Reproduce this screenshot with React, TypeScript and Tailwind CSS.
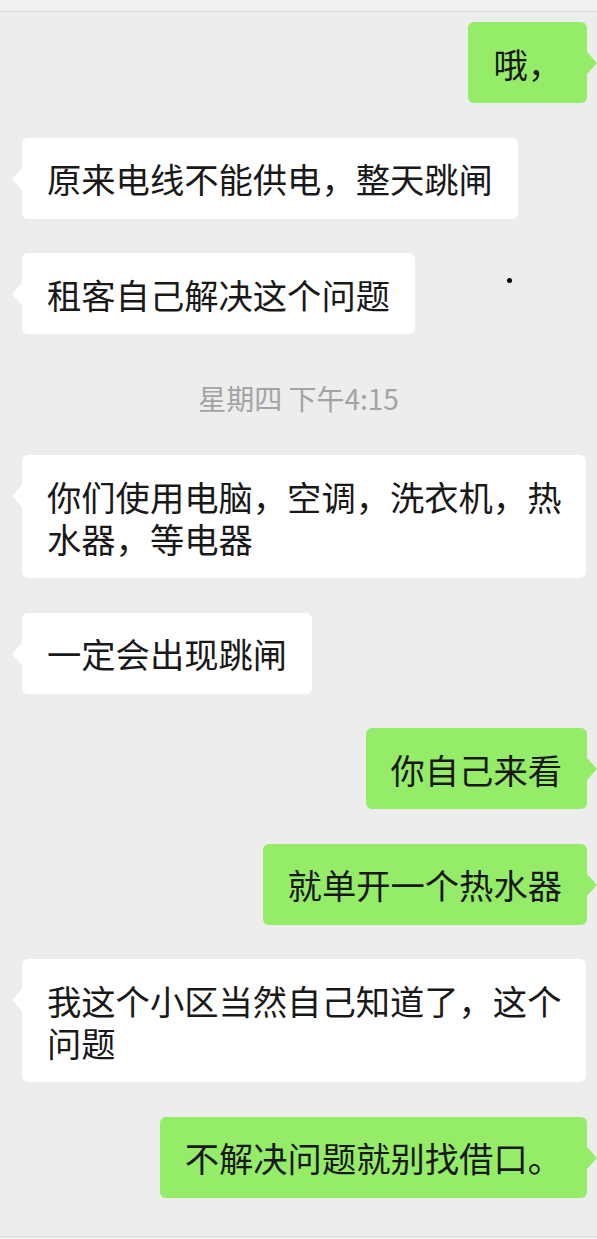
import React from "react";

type Msg =
  | { kind: "in" | "out"; lines: string[] }
  | { kind: "time"; text: string };

const messages: Msg[] = [
  { kind: "out", lines: ["哦，"] },
  { kind: "in", lines: ["原来电线不能供电，整天跳闸"] },
  { kind: "in", lines: ["租客自己解决这个问题"] },
  { kind: "time", text: "星期四 下午4:15" },
  { kind: "in", lines: ["你们使用电脑，空调，洗衣机，热", "水器，等电器"] },
  { kind: "in", lines: ["一定会出现跳闸"] },
  { kind: "out", lines: ["你自己来看"] },
  { kind: "out", lines: ["就单开一个热水器"] },
  { kind: "in", lines: ["我这个小区当然自己知道了，这个", "问题"] },
  { kind: "out", lines: ["不解决问题就别找借口。"] },
];

function Bubble({ kind, lines }: { kind: "in" | "out"; lines: string[] }) {
  const mine = kind === "out";
  return (
    <div
      className={`relative rounded-[6px] px-[25px] py-[19.5px] text-[34.3px] leading-[42px] whitespace-nowrap text-[#191919] ${
        mine ? "self-end bg-[#95ec69]" : "self-start ml-[12px] bg-white"
      }`}
    >
      {lines.map((l, i) => (
        <div key={i} className="h-[42px]">
          {l}
        </div>
      ))}
      {mine ? (
        <span className="absolute right-[-10px] top-[30px] w-0 h-0 border-y-[11px] border-y-transparent border-l-[10px] border-l-[#95ec69]" />
      ) : (
        <span className="absolute left-[-10px] top-[30px] w-0 h-0 border-y-[11px] border-y-transparent border-r-[10px] border-r-white" />
      )}
    </div>
  );
}

export default function App() {
  return (
    <div className="relative w-[597px] h-[1239px] bg-[#ededed] flex flex-col overflow-hidden font-['Noto_Sans_CJK_SC','Noto_Sans',sans-serif]">
      <div className="h-[12px] bg-[#f0f0f0] border-b border-[#dcdcdc]" />

      <div className="flex flex-col gap-[34.5px] pt-[10px] px-[10px]">
        {messages.map((m, i) =>
          m.kind === "time" ? (
            <div
              key={i}
              className="h-[52px] pt-[6px] leading-[46px] text-center text-[28px] text-[#a3a3a3]"
            >
              {m.text}
            </div>
          ) : (
            <Bubble key={i} kind={m.kind} lines={m.lines} />
          )
        )}
      </div>

      <div className="mt-auto h-[3px] bg-[#f2f2f2] border-t border-[#dcdcdc]" />

      <span className="absolute left-[507px] top-[278px] w-[5px] h-[5px] rounded-full bg-black" />
    </div>
  );
}
